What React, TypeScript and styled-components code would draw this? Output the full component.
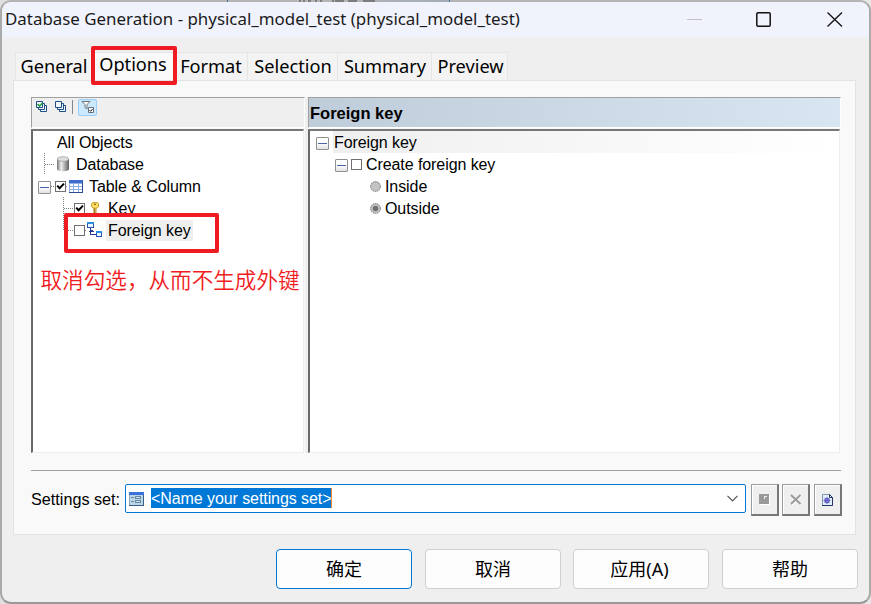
import React from "react";
import styled, { createGlobalStyle } from "styled-components";

const Global = createGlobalStyle`
  * { box-sizing: border-box; }
  body { margin: 0; background: #b5b5b5; overflow: hidden; }
  svg { display: block; flex: none; }
`;

const ui = `"Noto Sans", "Noto Sans CJK SC", sans-serif`;
const arial = `"Liberation Sans", Arial, sans-serif`;

const Desktop = styled.div`
  position: relative;
  width: 871px;
  height: 604px;
  background: linear-gradient(90deg, #e0e0e0 0 40px, #b5b5b5 40px 830px, #e8e8e8 830px);
`;
const WindowBehind = styled.div`
  position: absolute;
  left: 227px;
  top: 0;
  width: 223px;
  height: 2px;
  overflow: hidden;
  border: 1px solid #3e7890;
  border-width: 0 1px;
  background: linear-gradient(90deg, #b5b5b5 45%, #a3adb8);
`;
const Dialog = styled.main`
  position: relative;
  width: 871px;
  height: 604px;
  border: 2px solid #aaa;
  border-top-color: #b5b5b5;
  border-bottom-color: #999;
  border-radius: 11px;
  background: #efefef;
  overflow: hidden;
  display: flex;
  flex-direction: column;
`;
const TitleBar = styled.header`
  height: 35px;
  flex: none;
  background: #f0f3fb;
  display: flex;
  align-items: center;
  padding: 0 26px 1px 3px;
`;
const Title = styled.h1`
  margin: 0;
  flex: 1;
  font: 400 16.9px/24px ${ui};
  color: #1b1b1b;
  white-space: nowrap;
`;
const WindowControls = styled.div`
  display: flex;
  gap: 54px;
  svg:last-child { margin-left: 2px; }
`;
const TabBar = styled.nav`
  height: 43px;
  padding: 15px 0 0 13px;
  display: flex;
  flex: none;
`;
const Tab = styled.button<{ $w: number; $active?: boolean; $shift?: number }>`
  width: ${(p) => p.$w}px;
  height: 28px;
  padding: 0 0 ${(p) => (p.$active ? 5 : 1)}px ${(p) => (p.$active ? 0 : 1)}px;
  border: 1px solid #e5e5e5;
  border-width: 1px 1px 0 0;
  &:first-child { border-left-width: 1px; }
  background: ${(p) => (p.$active ? "#f9f9f9" : "#f3f3f3")};
  font: 400 18.2px/24px ${ui};
  text-indent: ${(p) => p.$shift ?? 0}px;
  color: #000;
  white-space: nowrap;
  display: flex;
  align-items: center;
  justify-content: center;
`;
const Page = styled.section`
  width: 843px;
  height: 455px;
  flex: none;
  margin-left: 11px;
  border: 1px solid #e3e3e3;
  background: #f9f9f9;
  padding: 16px 14px 0 17px;
`;
const Panes = styled.div`
  display: flex;
  height: 356px;
`;
const Pane = styled.div<{ $w: number }>`
  width: ${(p) => p.$w}px;
  display: flex;
  flex-direction: column;
`;
const Splitter = styled.div`
  width: 3px;
  background: #efefef;
`;
const PaneHead = styled.div<{ $blue?: boolean }>`
  height: 31px;
  border: 1px solid #a0a0a0;
  border-right-color: #fff;
  border-bottom-color: #fff;
  background: ${(p) => (p.$blue ? "linear-gradient(90deg, #bfccda, #d8e5f3)" : "#efefef")};
  padding-left: ${(p) => (p.$blue ? 1 : 0)}px;
  font: 700 16.5px/30px ${arial};
  color: #000;
  display: flex;
  align-items: flex-start;
`;
const ToolStrip = styled.div`
  display: flex;
  align-items: center;
  height: 18px;
  padding-left: 4px;
`;
const IconPair = styled.div`
  display: flex;
  gap: 7px;
`;
const ToolDivider = styled.i`
  width: 1px;
  height: 14px;
  background: #858585;
  margin: 0 5px;
`;
const FilterToggle = styled.button`
  width: 19px;
  height: 17px;
  padding: 0;
  border: 1px solid #99cffb;
  border-radius: 2px;
  background: #cce8ff;
  display: grid;
  place-items: center;
`;
const List = styled.div`
  height: 324px;
  margin-top: 1px;
  border: 2px solid #696969;
  border-top-color: #777;
  border-right: 1px solid #eee;
  border-bottom: 1px solid #eee;
  margin-right: 1px;
  background: #fff;
`;
const Row = styled.div<{ $indent?: number; $shade?: boolean }>`
  height: 22px;
  padding-left: ${(p) => p.$indent ?? 0}px;
  display: flex;
  align-items: center;
  font: 400 16px/20px ${arial};
  letter-spacing: -0.08px;
  color: #000;
  white-space: nowrap;
  background: ${(p) => (p.$shade ? "linear-gradient(90deg, #fff 0 23px, #efefef 23px, #fff 100%)" : "none")};
`;
const Label = styled.span<{ $ml: number; $sel?: boolean }>`
  margin-left: ${(p) => p.$ml}px;
  line-height: 21px;
  ${(p) => p.$sel && "background: #efefef; padding: 0 2px;"}
`;
const Toggle = styled.span`
  width: 13px;
  height: 13px;
  margin-top: 2px;
  flex: none;
  border: 1px solid #919191;
  border-radius: 1px;
  background: linear-gradient(#fff 45%, #e2e2e2);
  display: grid;
  place-items: center;
  &::after { content: ""; width: 9px; height: 1px; background: #4b63a7; }
`;
const Check = styled.span<{ $ml?: number }>`
  width: 11px;
  height: 11px;
  margin-left: ${(p) => p.$ml ?? 0}px;
  margin-top: 1px;
  flex: none;
  border: 1px solid #707070;
  background: #fff;
`;
const Rule = styled.hr`
  margin: 17px 0 13px;
  border: 0;
  height: 1px;
  background: #a0a0a0;
`;
const Settings = styled.div`
  display: flex;
  width: 811px;
  height: 32px;
`;
const SettingsLabel = styled.label`
  width: 94px;
  font: 400 16.2px/30px ${arial};
  white-space: nowrap;
`;
const Combo = styled.div`
  width: 621px;
  height: 29px;
  margin-right: 5px;
  border: 1px solid #0078d4;
  border-radius: 2px;
  background: #fff;
  display: flex;
  align-items: center;
  padding: 0 7px 0 3px;
`;
const Selected = styled.span`
  width: 181px;
  height: 20px;
  margin: 0 auto 1px 7px;
  background: #0078d7;
  border-right: 1px solid #ff8728;
  color: #fff;
  font: 400 16px/21px ${arial};
  letter-spacing: -0.08px;
  white-space: nowrap;
`;
const IconButton = styled.button<{ $mr: number }>`
  width: 28px;
  height: 32px;
  margin-right: ${(p) => p.$mr}px;
  padding: 0;
  border: 1px solid #9b9b9b;
  border-right: 2px solid #777;
  border-bottom: 2px solid #777;
  background: #efefef;
  box-shadow: inset 1px 1px #fff;
  display: grid;
  place-items: center;
`;
const Footer = styled.footer`
  display: flex;
  padding: 14px 0 0 274px;
`;
const Action = styled.button<{ $mr: number; $primary?: boolean; $nudge?: number }>`
  width: 136px;
  height: 40px;
  flex: none;
  margin-right: ${(p) => p.$mr}px;
  padding: 0 ${(p) => p.$nudge ?? 0}px 0 0;
  border: 1px solid ${(p) => (p.$primary ? "#0078d4" : "#cfcfcf")};
  border-radius: 4px;
  background: #fdfdfd;
  font: 400 18px/30px ${ui};
  color: #000;
`;
const Highlight = styled.div<{ $x: number; $y: number; $w: number; $h: number }>`
  position: absolute;
  left: ${(p) => p.$x - 2}px;
  top: ${(p) => p.$y - 2}px;
  width: ${(p) => p.$w}px;
  height: ${(p) => p.$h}px;
  border: 4px solid #ef1b23;
  border-radius: 2px;
`;
const Note = styled.p`
  position: absolute;
  left: 38.5px;
  top: 261px;
  margin: 0;
  font: 350 21.6px/32px "Noto Sans CJK SC", sans-serif;
  color: #f01c22;
  white-space: nowrap;
`;

const Checkmark = ({ on, ml }: { on?: boolean; ml?: number }) => (
  <Check $ml={ml}>
    {on && (
      <svg width="9" height="9" viewBox="0 0 9 9">
        <path d="M1.200 3.600 3.600 6.200 8 1.600" fill="none" stroke="#000" strokeWidth="2" />
      </svg>
    )}
  </Check>
);
const Guide = ({ w, d }: { w: number; d: string }) => (
  <svg width={w} height="22" viewBox={`0 0 ${w} 22`} shapeRendering="crispEdges">
    <path d={d} fill="none" stroke="#808080" strokeDasharray="1 1" />
  </svg>
);
const StackIcon = ({ checked }: { checked?: boolean }) => (
  <svg width="12" height="12" viewBox="0 0 12 12">
    <g fill="#f4f8fb" stroke="#1d4f86">
      <path d="M4.500 4.500h6v6h-6z" />
      <path d="M2.500 2.500h6v6h-6z" />
      <path d="M.5.5h6v6h-6z" />
    </g>
    {checked && <path d="m1.500 3 2 2 3-3" fill="none" stroke="#21a038" strokeWidth="1.600" />}
  </svg>
);
const FilterIcon = () => (
  <svg width="14" height="14" viewBox="0 0 14 14">
    <path d="M1 1.500h8L6 4.500V9L4 7.500v-3z" fill="#fff" stroke="#6d7377" />
    <path d="M7.500 7.500h5v5h-5z" fill="#fff" stroke="#65717e" />
    <path d="m8.500 10 1.200 1.300 2-2.500" fill="none" stroke="#222" />
  </svg>
);
const DatabaseIcon = () => (
  <svg width="14" height="16" viewBox="0 0 14 16">
    <defs>
      <linearGradient id="cyl">
        <stop stopColor="#777" />
        <stop offset=".35" stopColor="#efefef" />
        <stop offset="1" stopColor="#606060" />
      </linearGradient>
    </defs>
    <path d="M1 3v10c0 3 12 3 12 0V3" fill="url(#cyl)" />
    <ellipse cx="7" cy="3" rx="5.700" ry="2.300" fill="#dedede" stroke="#999" strokeWidth=".7" />
  </svg>
);
const TableIcon = () => (
  <svg width="14" height="13" viewBox="0 0 14 13" shapeRendering="crispEdges">
    <path d="M0 0h14v13H0z" fill="#91aee0" />
    <path d="M0 0h14v3H0z" fill="#3f6bcf" />
    <path d="M1 4h3v2H1zm4 0h4v2H5zm5 0h3v2h-3zM1 7h3v2H1zm4 0h4v2H5zm5 0h3v2h-3zM1 10h3v2H1zm4 0h4v2H5zm5 0h3v2h-3z" fill="#fff" />
    <path d="M0 12.500h13.500V3" fill="none" stroke="#2b4b8d" />
  </svg>
);
const KeyIcon = () => (
  <svg width="8" height="12" viewBox="0 0 8 12">
    <path d="M3.500 6v5.500" stroke="#a57a16" strokeWidth="2" />
    <path d="M4 8h2M4 10h2" stroke="#c49a30" />
    <path d="M1.500.7h5l1 1v3l-1.500 1.500H2L.7 4.700v-3z" fill="#ffdf68" stroke="#c79824" />
    <path d="M3 2.300h2" stroke="#8f6812" strokeWidth="1.300" />
  </svg>
);
const ReferenceIcon = () => (
  <svg width="16" height="16" viewBox="0 0 16 16" shapeRendering="crispEdges">
    <path d="M.5.5h6v5h-6zM9.500 9.500h5v5h-5z" fill="#e8f8ff" stroke="#2750b4" />
    <path d="M0 0h7v2H0zM9 9h6v2H9z" fill="#2d8ddc" />
    <path d="M3.500 6v6.500H9M1.500 9.500h5M2.500 8.500h3" fill="none" stroke="#283b8e" />
  </svg>
);
const FormIcon = () => (
  <svg width="15" height="14" viewBox="0 0 15 14" shapeRendering="crispEdges">
    <path d="M.5.5h14v13H.5z" fill="#bcd5e5" stroke="#8ba8c0" />
    <path d="M0 0h15v3H0z" fill="#3972d8" />
    <path d="M2 5.500h3M2 9.500h3M6.500 4.500h5v2h-5zM6.500 8.500h5v2h-5z" fill="#cbe2ed" stroke="#668aa4" />
    <path d="M14.500 3v10.500H0" fill="none" stroke="#35618b" />
  </svg>
);
const Radio = ({ on }: { on?: boolean }) => (
  <svg width="11" height="11" viewBox="0 0 11 11">
    <circle cx="5.500" cy="5.500" r="4.900" fill="#c3c3c3" stroke="#777" strokeDasharray="1.500 .7" />
    {on && <circle cx="5.500" cy="5.500" r="2.700" fill="#707070" />}
  </svg>
);
const SaveIcon = () => (
  <svg width="11" height="11">
    <path d="M1 1h10v10H1z" fill="#fff" />
    <path d="M0 0h10v10H0z" fill="#999" />
    <path d="M5 2h3v1H6v2H5z" fill="#efefef" />
  </svg>
);
const DeleteIcon = () => (
  <svg width="12" height="11">
    <path d="m2 2 9 9m0-9-9 9" stroke="#fff" strokeWidth="1.500" />
    <path d="m1 1 9.500 9m0-9L1 10" stroke="#999" strokeWidth="1.800" />
  </svg>
);
const NewSetIcon = () => (
  <svg width="11" height="12" viewBox="0 0 11 12">
    <path d="M.5.5h7l3 3v8H.5z" fill="#dff0fb" stroke="#8394ad" />
    <path d="M0 11.500h10.500V3.500L7.500.5v3h3" fill="none" stroke="#283666" />
    <circle cx="5" cy="6.500" r="2.300" fill="#aaa7ff" stroke="#5b54c0" />
    <path d="M5 3v7M1.500 6.500h7M2.500 4l5 5m0-5-5 5" stroke="#5b54c0" strokeWidth=".8" />
  </svg>
);

const tabs = [
  { name: "General", w: 77 },
  { name: "Options", w: 85, active: true, shift: -2 },
  { name: "Format", w: 71, shift: -3 },
  { name: "Selection", w: 90 },
  { name: "Summary", w: 94 },
  { name: "Preview", w: 76, shift: 1 },
];

export default function App() {
  return (
    <Desktop>
      <Global />
      <Dialog>
        <TitleBar>
          <Title>Database Generation - physical_model_test (physical_model_test)</Title>
          <WindowControls>
            <svg width="15" height="15"><path d="M0 7.500h15" stroke="#c1c1c4" /></svg>
            <svg width="15" height="15"><rect x=".8" y=".8" width="13.400" height="13.400" rx="1.200" fill="none" stroke="#111" strokeWidth="1.500" /></svg>
            <svg width="16" height="15"><path d="m.5.5 14.500 14M15 .5.5 14.500" stroke="#111" strokeWidth="1.300" /></svg>
          </WindowControls>
        </TitleBar>
        <TabBar>
          {tabs.map((t) => <Tab key={t.name} $w={t.w} $active={t.active} $shift={t.shift}>{t.name}</Tab>)}
        </TabBar>
        <Page>
          <Panes>
            <Pane $w={274}>
              <PaneHead>
                <ToolStrip>
                  <IconPair>
                    <StackIcon checked />
                    <StackIcon />
                  </IconPair>
                  <ToolDivider />
                  <FilterToggle><FilterIcon /></FilterToggle>
                </ToolStrip>
              </PaneHead>
              <List>
                <Row $indent={24}><Label $ml={0}>All Objects</Label></Row>
                <Row>
                  <Guide w={23} d="M11.500 0v22M12 11.500h10" />
                  <DatabaseIcon />
                  <Label $ml={6}>Database</Label>
                </Row>
                <Row $indent={5}>
                  <Toggle />
                  <Guide w={4} d="M0 11.500h4" />
                  <Checkmark on />
                  <Guide w={3} d="M0 11.500h2" />
                  <TableIcon />
                  <Label $ml={6}>Table &amp; Column</Label>
                </Row>
                <Row $indent={30}>
                  <Guide w={11} d="M.5 0v22M1 11.500h10" />
                  <Checkmark on />
                  <Guide w={6} d="M0 11.500h0" />
                  <KeyIcon />
                  <Label $ml={9}>Key</Label>
                </Row>
                <Row $indent={30}>
                  <Guide w={11} d="M.5 0v12M1 11.500h10" />
                  <Checkmark />
                  <Guide w={2} d="M0 11.500h2" />
                  <ReferenceIcon />
                  <Label $ml={3} $sel>Foreign key</Label>
                </Row>
              </List>
            </Pane>
            <Splitter />
            <Pane $w={533}>
              <PaneHead $blue>Foreign key</PaneHead>
              <List>
                <Row $indent={6} $shade><Toggle /><Label $ml={5}>Foreign key</Label></Row>
                <Row $indent={25}><Toggle /><Checkmark ml={3} /><Label $ml={4}>Create foreign key</Label></Row>
                <Row $indent={60}><Radio /><Label $ml={4}>Inside</Label></Row>
                <Row $indent={60}><Radio on /><Label $ml={4}>Outside</Label></Row>
              </List>
            </Pane>
          </Panes>
          <Rule />
          <Settings>
            <SettingsLabel>Settings set:</SettingsLabel>
            <Combo>
              <FormIcon />
              <Selected>&lt;Name your settings set&gt;</Selected>
              <svg width="11" height="7"><path d="m.5 .8 5 5 5-5" fill="none" stroke="#555" strokeWidth="1.200" /></svg>
            </Combo>
            <IconButton $mr={3}><SaveIcon /></IconButton>
            <IconButton $mr={4}><DeleteIcon /></IconButton>
            <IconButton $mr={0}><NewSetIcon /></IconButton>
          </Settings>
        </Page>
        <Footer>
          <Action $primary $mr={13}>确定</Action>
          <Action $mr={12}>取消</Action>
          <Action $mr={13} $nudge={3}>应用(A)</Action>
          <Action $mr={0}>帮助</Action>
        </Footer>
        <Highlight $x={91} $y={46} $w={86} $h={39} />
        <Highlight $x={64} $y={213} $w={155} $h={40} />
        <Note>取消勾选，从而不生成外键</Note>
      </Dialog>
      <WindowBehind>
        <svg width="80" height="2" viewBox="-72 0 80 2" overflow="visible">
          <path d="M0 0v2M4 0v2M8 1h3M16 0v2M21 0v2M33 0v2M35 1h9M48 1h9M63 1h12" stroke="#444" />
        </svg>
      </WindowBehind>
    </Desktop>
  );
}
